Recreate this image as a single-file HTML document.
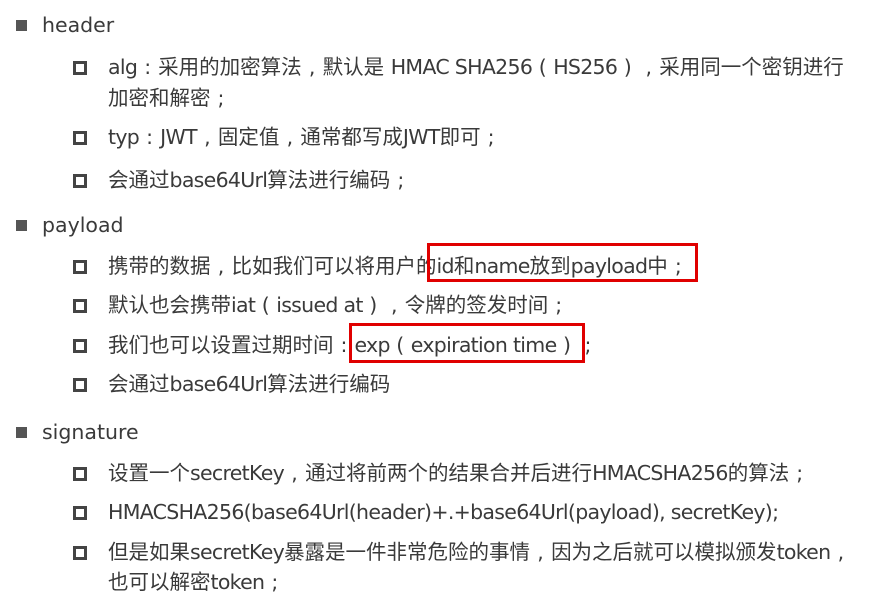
<!DOCTYPE html>
<html><head><meta charset="utf-8"><style>
body{margin:0;width:891px;height:614px;background:#fff;overflow:hidden;position:relative;font-family:"DejaVu Sans","Noto Sans CJK SC",sans-serif;color:#3a3a3a;font-size:20.5px}
.l{position:absolute;white-space:nowrap;line-height:24px}
.m{left:42px}.s{left:108px}
.mb{position:absolute;left:16px;width:11px;height:11px;background:#555}
.sb{position:absolute;left:73px;width:8px;height:8px;border:3px solid #444}
.box{position:absolute;border:3px solid #e00000}
i{font-style:normal;display:inline-block;width:21px;text-align:center}
b{font-weight:normal;letter-spacing:-0.7px}
</style></head><body>
<div class="mb" style="top:20px"></div><div class="l m" style="top:13px">header</div>
<div class="sb" style="top:61px"></div><div class="l s" style="top:55px"><b>alg</b><i>:</i>采用的加密算法<i>,</i>默认是 <b>HMAC SHA256</b><i>(</i><b>HS256</b><i>)</i><i>,</i>采用同一个密钥进行</div>
<div class="l s" style="top:86px">加密和解密<i>;</i></div>
<div class="sb" style="top:131px"></div><div class="l s" style="top:125px"><b>typ</b><i>:</i><b>JWT</b><i>,</i>固定值<i>,</i>通常都写成<b>JWT</b>即可<i>;</i></div>
<div class="sb" style="top:174px"></div><div class="l s" style="top:168px">会通过<b>base64Url</b>算法进行编码<i>;</i></div>
<div class="mb" style="top:220px"></div><div class="l m" style="top:213px">payload</div>
<div class="sb" style="top:260px"></div><div class="l s" style="top:254px">携带的数据<i>,</i>比如我们可以将用户的<b>id</b>和<b>name</b>放到<b>payload</b>中<i>;</i></div>
<div class="sb" style="top:299px"></div><div class="l s" style="top:293px">默认也会携带<b>iat</b><i>(</i><b>issued at</b><i>)</i><i>,</i>令牌的签发时间<i>;</i></div>
<div class="sb" style="top:339px"></div><div class="l s" style="top:333px">我们也可以设置过期时间<i>:</i><b>exp</b><i>(</i><b>expiration time</b><i>)</i><i>;</i></div>
<div class="sb" style="top:378px"></div><div class="l s" style="top:372px">会通过<b>base64Url</b>算法进行编码</div>
<div class="mb" style="top:427px"></div><div class="l m" style="top:420px">signature</div>
<div class="sb" style="top:467px"></div><div class="l s" style="top:461px">设置一个<b>secretKey</b><i>,</i>通过将前两个的结果合并后进行<b>HMACSHA256</b>的算法<i>;</i></div>
<div class="sb" style="top:506px"></div><div class="l s" style="top:500px"><b>HMACSHA256(base64Url(header)+.+base64Url(payload), secretKey);</b></div>
<div class="sb" style="top:546px"></div><div class="l s" style="top:540px">但是如果<b>secretKey</b>暴露是一件非常危险的事情<i>,</i>因为之后就可以模拟颁发<b>token</b><i>,</i></div>
<div class="l s" style="top:570px">也可以解密<b>token</b><i>;</i></div>
<div class="box" style="left:427px;top:243px;width:265px;height:33px"></div>
<div class="box" style="left:349px;top:323px;width:230px;height:34px"></div>
</body></html>
